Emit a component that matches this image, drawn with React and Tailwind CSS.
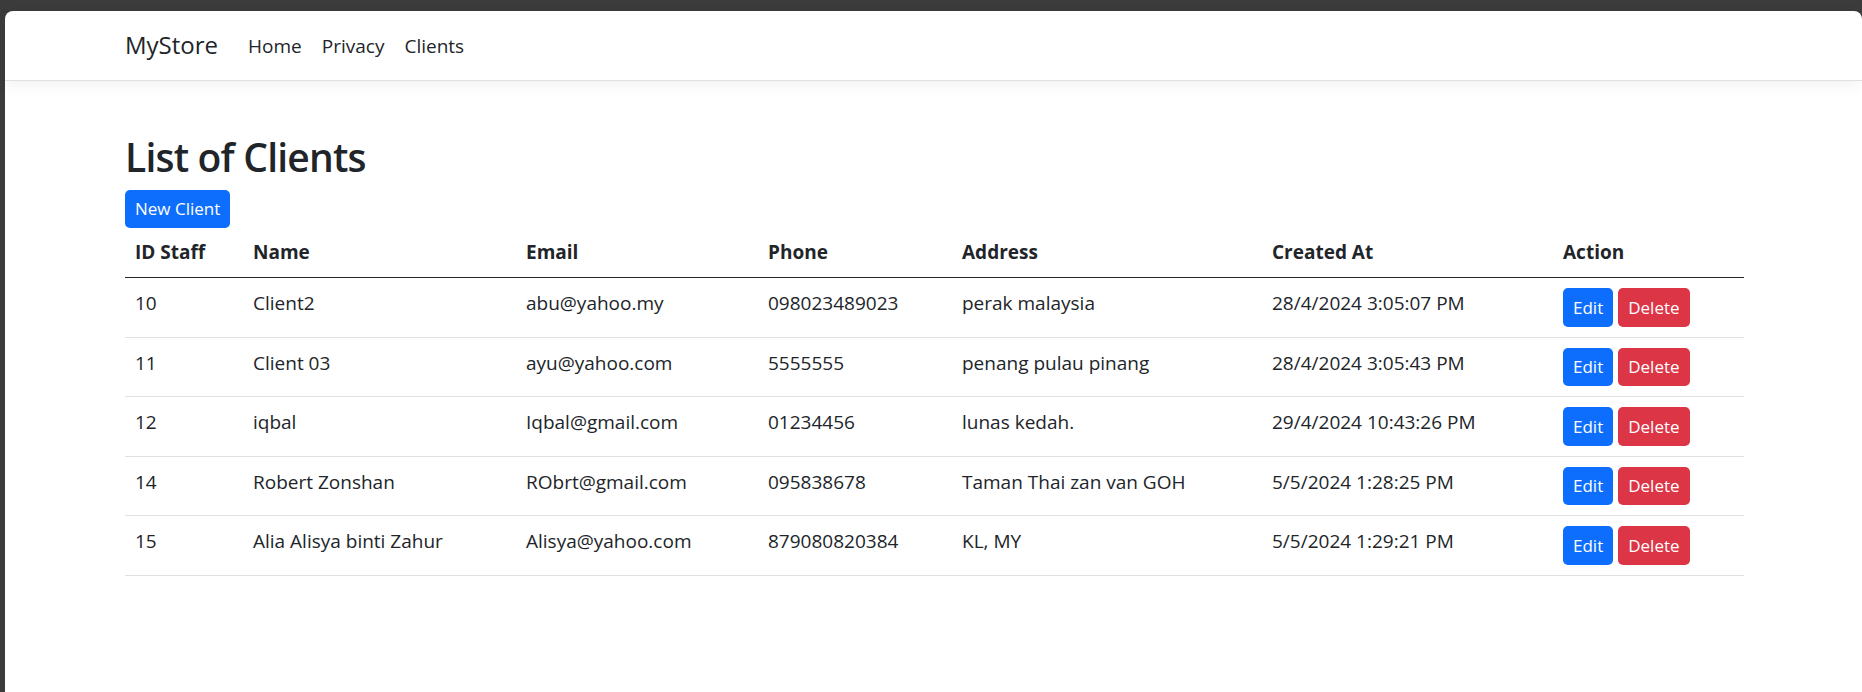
const clients = [
  { id: 10, name: "Client2", email: "abu@yahoo.my", phone: "098023489023", address: "perak malaysia", createdAt: "28/4/2024 3:05:07 PM" },
  { id: 11, name: "Client 03", email: "ayu@yahoo.com", phone: "5555555", address: "penang pulau pinang", createdAt: "28/4/2024 3:05:43 PM" },
  { id: 12, name: "iqbal", email: "Iqbal@gmail.com", phone: "01234456", address: "lunas kedah.", createdAt: "29/4/2024 10:43:26 PM" },
  { id: 14, name: "Robert Zonshan", email: "RObrt@gmail.com", phone: "095838678", address: "Taman Thai zan van GOH", createdAt: "5/5/2024 1:28:25 PM" },
  { id: 15, name: "Alia Alisya binti Zahur", email: "Alisya@yahoo.com", phone: "879080820384", address: "KL, MY", createdAt: "5/5/2024 1:29:21 PM" },
];

const columns = [
  { label: "ID Staff", width: "w-[118px]" },
  { label: "Name", width: "w-[273px]" },
  { label: "Email", width: "w-[242px]" },
  { label: "Phone", width: "w-[194px]" },
  { label: "Address", width: "w-[310px]" },
  { label: "Created At", width: "w-[291px]" },
  { label: "Action", width: "w-[191px]" },
];

export default function App() {
  return (
    <div className="min-h-screen bg-[#3b3b3b] pt-[11px] pl-[5px] font-['Open_Sans',sans-serif] text-[#212529]">
      <div className="bg-white rounded-t-lg min-h-[681px]">
        <header className="h-[70px] border-b border-[#dee2e6] shadow-[0_5px_15px_rgba(0,0,0,0.05)] flex items-center">
          <nav className="ml-[120px] flex items-center">
            <a className="text-[24px] leading-[36px] mr-[20px] pb-[2px]">MyStore</a>
            <a className="text-[19px] leading-[30px] px-[10px]">Home</a>
            <a className="text-[19px] leading-[30px] px-[10px]">Privacy</a>
            <a className="text-[19px] leading-[30px] px-[10px]">Clients</a>
          </nav>
        </header>

        <main className="ml-[120px] w-[1619px] pt-[52px]">
          <h2 className="text-[39px] leading-[48px] font-semibold mb-[9px] tracking-[-0.8px]">
            List of Clients
          </h2>
          <button className="h-[38px] px-[10px] rounded-[5px] bg-[#0d6efd] text-white text-[17px]">
            New Client
          </button>

          <table className="w-[1619px] table-fixed border-collapse text-[19px]">
            <thead>
              <tr className="border-b border-[#212529]">
                {columns.map((c) => (
                  <th key={c.label} className={`${c.width} text-left font-bold px-[10px] py-[10px] leading-[29px]`}>
                    {c.label}
                  </th>
                ))}
              </tr>
            </thead>
            <tbody>
              {clients.map((c) => (
                <tr key={c.id} className="border-b border-[#dee2e6] align-top">
                  <td className="px-[10px] py-[10px] leading-[30px]">{c.id}</td>
                  <td className="px-[10px] py-[10px] leading-[30px]">{c.name}</td>
                  <td className="px-[10px] py-[10px] leading-[30px]">{c.email}</td>
                  <td className="px-[10px] py-[10px] leading-[30px]">{c.phone}</td>
                  <td className="px-[10px] py-[10px] leading-[30px]">{c.address}</td>
                  <td className="px-[10px] py-[10px] leading-[30px]">{c.createdAt}</td>
                  <td className="px-[10px] py-[10px]">
                    <div className="flex gap-[5px]">
                      <button className="h-[38.6px] px-[10px] rounded-[5px] bg-[#0d6efd] text-white text-[17px]">
                        Edit
                      </button>
                      <button className="h-[38.6px] px-[10px] rounded-[5px] bg-[#dc3545] text-white text-[17px]">
                        Delete
                      </button>
                    </div>
                  </td>
                </tr>
              ))}
            </tbody>
          </table>
        </main>
      </div>
    </div>
  );
}
